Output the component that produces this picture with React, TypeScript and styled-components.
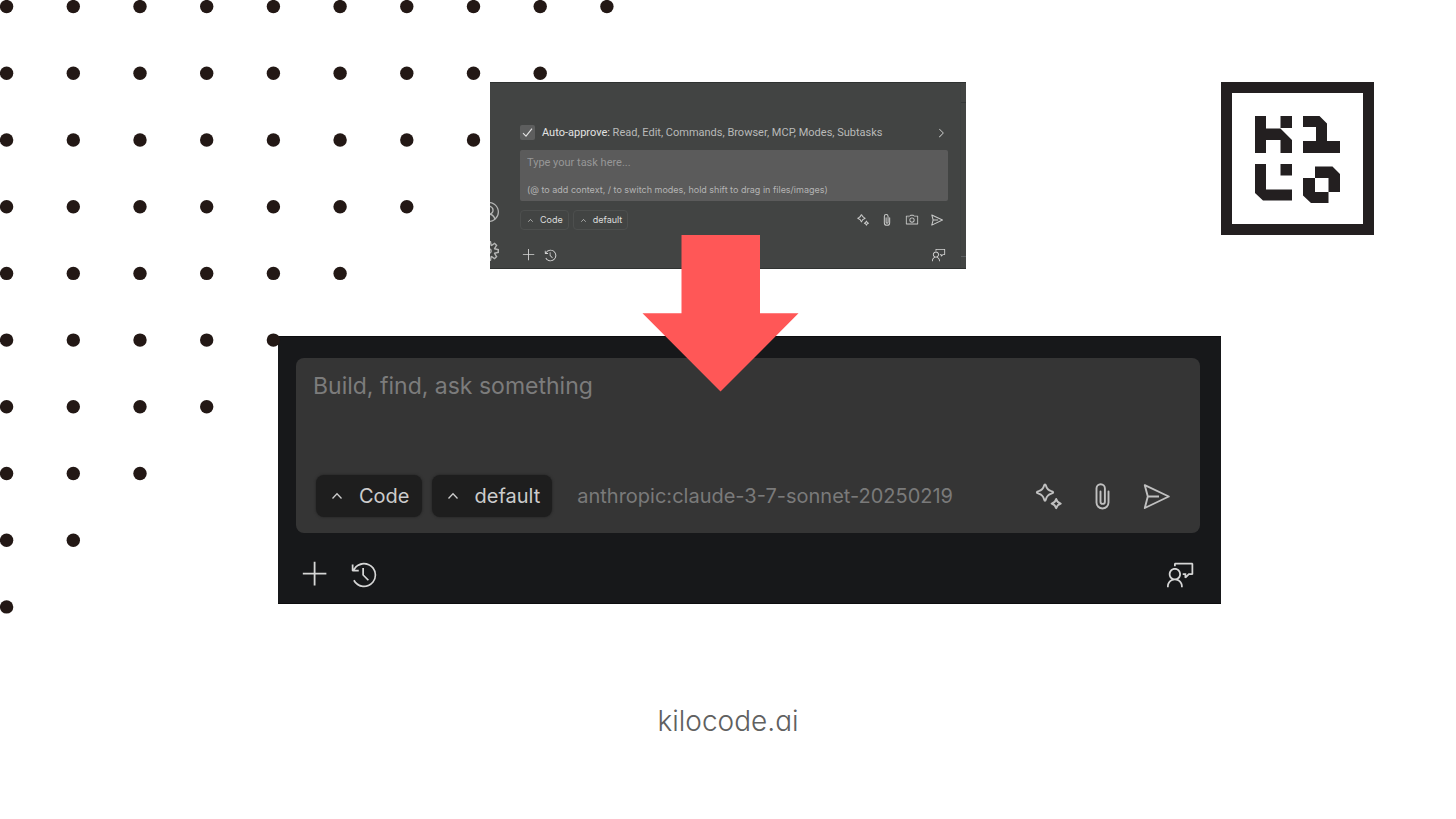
import React from "react";
import styled, { createGlobalStyle } from "styled-components";
import {
  VscAccount,
  VscAdd,
  VscChevronRight,
  VscDeviceCamera,
  VscFeedback,
  VscHistory,
  VscSettingsGear,
} from "react-icons/vsc";

const GlobalStyle = createGlobalStyle`
  * { box-sizing: border-box; }
  body {
    margin: 0;
    background: #ffffff;
    font-family: Inter, "Liberation Sans", sans-serif;
  }
`;

const Slide = styled.main`
  position: relative;
  display: flex;
  flex-direction: column;
  min-height: 100vh;
  padding-top: 82px;
  overflow: hidden;
`;

const DotField = styled.svg`
  position: absolute;
  top: 0;
  left: 0;
`;

const TopRow = styled.section`
  position: relative;
  display: grid;
  grid-template-columns: minmax(0, 1fr) minmax(0, 476px) minmax(0, 1fr);
  align-items: start;
  padding: 0 82px;
`;

const LogoLink = styled.a`
  grid-column: 3;
  justify-self: end;
  line-height: 0;
`;

const Arrow = styled.svg`
  position: absolute;
  top: 153px;
  left: calc(50% - 86px);
  z-index: 2;
`;

const BeforeCard = styled.form`
  position: relative;
  grid-column: 2;
  display: flex;
  flex-direction: column;
  height: 187px;
  padding: 42px 18px 0 30px;
  overflow: hidden;
  background: #424443;
  border: 1px solid #2f3231;
  border-width: 1px 0;
`;

const EdgeIcon = styled.span<{ $top: number }>`
  position: absolute;
  top: ${(p) => p.$top}px;
  left: -11px;
  font-size: 20px;
  line-height: 0;
  color: #b4b5b4;
`;

const ScrollEdge = styled.span`
  position: absolute;
  top: 0;
  right: 0;
  bottom: 0;
  width: 6px;
  border-left: 1px solid #3e4141;

  &::before,
  &::after {
    content: "";
    position: absolute;
    left: 0;
    right: 0;
    height: 1px;
    background: #343738;
  }
  &::before { top: 19px; }
  &::after { bottom: 11px; background: #5b5e60; }
`;

const ApproveRow = styled.div`
  display: flex;
  align-items: center;
  height: 15px;
  font-family: Roboto, "Liberation Sans", sans-serif;
  font-size: 11px;
  color: #b9bab9;
`;

const ApproveLabel = styled.label`
  display: flex;
  align-items: center;
  flex: 1;
  gap: 7px;
  white-space: nowrap;
`;

const ApproveName = styled.span`
  color: #e2e3e2;
`;

const Tick = styled.input`
  appearance: none;
  width: 15px;
  height: 15px;
  margin: 0;
  border-radius: 2px;
  background: #5d5e5e
    url("data:image/svg+xml,%3Csvg xmlns='http://www.w3.org/2000/svg' viewBox='0 0 15 15'%3E%3Cpath d='M3 8.2 6 11.2 12 3.6' fill='none' stroke='%23e4e4e4' stroke-width='1.1'/%3E%3C/svg%3E");
`;

const TaskBox = styled.div`
  display: flex;
  flex-direction: column;
  justify-content: space-between;
  height: 51px;
  margin-top: 10px;
  padding: 5px 7px;
  border-radius: 2px;
  background: #5b5b5b;
`;

const TaskInput = styled.textarea`
  display: block;
  width: 100%;
  height: 15px;
  padding: 0;
  border: 0;
  outline: 0;
  resize: none;
  overflow: hidden;
  background: transparent;
  color: #e0e0e0;
  font: 11px/15px Roboto, "Liberation Sans", sans-serif;

  &::placeholder { color: #979797; opacity: 1; }
`;

const Hint = styled.span`
  font-size: 9px;
  line-height: 12px;
  white-space: nowrap;
  color: #b4b4b4;
`;

const BeforeTools = styled.div`
  display: flex;
  align-items: center;
  gap: 4px;
  height: 20px;
  margin-top: 9px;
`;

const SmallChip = styled.button`
  display: flex;
  align-items: center;
  gap: 6px;
  height: 20px;
  padding: 0 5px 0 6px;
  border: 1px solid #4d4f4e;
  border-radius: 4px;
  background: transparent;
  color: #dcdddc;
  font: 9px/12px Inter, "Liberation Sans", sans-serif;
`;

const IconButton = styled.button<{ $size: number; $color: string }>`
  display: grid;
  place-items: center;
  padding: 0;
  border: 0;
  background: transparent;
  color: ${(p) => p.$color};
  font-size: ${(p) => p.$size}px;
  line-height: 0;
`;

const IconGroup = styled.div<{ $gap: number; $end: number }>`
  display: flex;
  align-items: center;
  gap: ${(p) => p.$gap}px;
  margin-left: auto;
  padding-right: ${(p) => p.$end}px;
`;

const BeforeFooter = styled.div`
  display: flex;
  align-items: center;
  gap: 8px;
  margin-top: 18px;
  padding: 0 2px;
`;

const AfterSection = styled.section`
  margin-top: 67px;
  padding: 0 235px 0 278px;
`;

const AfterCard = styled.form`
  height: 268px;
  padding: 21px 21px 0 18px;
  background: #17181a;
  border: 1px solid #0c0d0e;
  border-width: 1px 0;
`;

const Prompt = styled.div`
  display: flex;
  flex-direction: column;
  justify-content: space-between;
  height: 175px;
  padding: 12px 30px 16px 17px;
  border-radius: 8px;
  background: #353535;
`;

const PromptInput = styled.textarea`
  display: block;
  width: 100%;
  height: 64px;
  padding: 0;
  border: 0;
  outline: 0;
  resize: none;
  background: transparent;
  color: #d0d0d0;
  font: 23px/32px Inter, "Liberation Sans", sans-serif;

  &::placeholder { color: #7c7c7c; opacity: 1; }
`;

const PromptTools = styled.div`
  display: flex;
  align-items: center;
  gap: 10px;
  padding-left: 3px;
`;

const Chip = styled.button`
  display: flex;
  align-items: center;
  gap: 15px;
  height: 42px;
  padding: 0 12px 0 14px;
  border: 0;
  border-radius: 8px;
  background: #1e1e1e;
  box-shadow: 0 0 2px 1px #2b2b2b;
  color: #cccccc;
  font: 20px/28px Inter, "Liberation Sans", sans-serif;
`;

const Model = styled.span`
  margin-left: 15px;
  color: #7a7a7a;
  font-size: 20px;
  line-height: 28px;
  white-space: nowrap;
`;

const AfterFooter = styled.div`
  display: flex;
  align-items: center;
  gap: 20px;
  margin-top: 27px;
  padding: 0 5px;
`;

const SiteFooter = styled.footer`
  padding: 99px 0 60px;
  text-align: center;
`;

const SiteLink = styled.a`
  color: #606060;
  font-size: 28px;
  font-weight: 300;
  line-height: 36px;
  font-feature-settings: "cv11";
  text-decoration: none;
`;

const dotRows = Array.from({ length: 10 }, (_, row) => 10 - row);

function Dots() {
  return (
    <DotField width="640" height="640" aria-hidden="true">
      {dotRows.map((count, row) =>
        Array.from({ length: count }, (_, col) => (
          <circle
            key={`${row}-${col}`}
            cx={6.6 + col * 66.7}
            cy={6.6 + row * 66.7}
            r="6.7"
            fill="#231815"
          />
        )),
      )}
    </DotField>
  );
}

function KiloLogo() {
  return (
    <svg width="153" height="153" viewBox="0 0 153 153" role="img" aria-label="Kilo">
      <path fill="#231f20" d="M0 0H153V153H0ZM11 11V142H142V11Z" fillRule="evenodd" />
      <g fill="#231f20">
        <path d="M34 34h11v12.500h14.500L71 58v13H59.500V58H45v13H34Z" />
        <path d="M59.500 34H71v12H59.500Z" />
        <path d="M82 34h16.500l7.500 7.500V59h13v12H82V59h13V45H82Z" />
        <path d="M34 82h11v25.500h26v11H42L34 111Z" />
        <path d="M59.500 82H71v11.500H59.500Z" />
        <path
          fillRule="evenodd"
          d="M94 84.500h17.500l7.500 7.500v18h-11.500v11H90l-8-7.500V96h12ZM94 96v14h13.500V96Z"
        />
      </g>
    </svg>
  );
}

function Caret({ size }: { size: number }) {
  return (
    <svg width={size} height={size} viewBox="0 0 14 14" fill="none" aria-hidden="true">
      <path d="M2.500 9.500 7 4.800l4.500 4.700" stroke="currentColor" strokeWidth="1.300" />
    </svg>
  );
}

type Glyph = { size: number };

const lineWidth = (size: number) => (size < 20 ? 2.3 : 1.9);

function Sparkles({ size }: Glyph) {
  return (
    <svg width={size} height={size} viewBox="0 0 27 27" fill="none" stroke="currentColor" strokeWidth={lineWidth(size)} strokeLinejoin="round" aria-hidden="true">
      <path d="M10 1.500c.6 0 .8.500 1 1.300.9 3.400 2 4.500 5.400 5.400.9.200 1.800.500 1.800 1.200s-.9 1-1.800 1.200c-3.400.9-4.500 2-5.400 5.400-.200.800-.400 1.800-1 1.800s-.8-1-1-1.800c-.9-3.400-2-4.500-5.400-5.400-.9-.200-1.800-.500-1.800-1.200s.9-1 1.800-1.200C7 7.300 8.100 6.200 9 2.800c.200-.8.400-1.300 1-1.300Z" />
      <path d="M21.200 16c.8 3 1.600 3.800 4.600 4.600-3 .8-3.800 1.600-4.600 4.600-.8-3-1.600-3.800-4.600-4.600 3-.8 3.800-1.600 4.600-4.600Z" />
    </svg>
  );
}

function Clip({ size }: Glyph) {
  return (
    <svg width={size} height={size} viewBox="0 0 27 27" fill="none" stroke="currentColor" strokeWidth={lineWidth(size)} strokeLinecap="round" aria-hidden="true">
      <path d="M19.500 8.500v11a6 6 0 0 1-12 0V5.500a4.200 4.200 0 0 1 8.400 0v13.200a2.200 2.200 0 0 1-4.400 0V8.500" />
    </svg>
  );
}

function Send({ size }: Glyph) {
  return (
    <svg width={size} height={size} viewBox="0 0 27 27" fill="none" stroke="currentColor" strokeWidth={lineWidth(size)} strokeLinejoin="round" aria-hidden="true">
      <path d="M1.800 2.200 25.800 13.500 1.800 25l3-11.500ZM5 13.500h11" />
    </svg>
  );
}

export default function App() {
  const soft = "#c9cac9";
  const dim = "#c0c0c0";
  const bright = "#d6d6d6";
  return (
    <Slide>
      <GlobalStyle />
      <Dots />
      <TopRow>
        <BeforeCard>
          <EdgeIcon $top={119}><VscAccount /></EdgeIcon>
          <EdgeIcon $top={158}><VscSettingsGear /></EdgeIcon>
          <ScrollEdge />
          <ApproveRow>
            <ApproveLabel>
              <Tick type="checkbox" defaultChecked />
              <span>
                <ApproveName>Auto-approve:</ApproveName> Read, Edit, Commands, Browser, MCP, Modes, Subtasks
              </span>
            </ApproveLabel>
            <IconButton type="button" aria-label="Expand" $size={14} $color={soft}>
              <VscChevronRight />
            </IconButton>
          </ApproveRow>
          <TaskBox>
            <TaskInput aria-label="Task" placeholder="Type your task here..." />
            <Hint>(@ to add context, / to switch modes, hold shift to drag in files/images)</Hint>
          </TaskBox>
          <BeforeTools>
            <SmallChip type="button"><Caret size={7} />Code</SmallChip>
            <SmallChip type="button"><Caret size={7} />default</SmallChip>
            <IconGroup $gap={12} $end={5}>
              <IconButton type="button" aria-label="Enhance" $size={12} $color={soft}><Sparkles size={12} /></IconButton>
              <IconButton type="button" aria-label="Attach" $size={12} $color={soft}><Clip size={12} /></IconButton>
              <IconButton type="button" aria-label="Screenshot" $size={14} $color={soft}><VscDeviceCamera /></IconButton>
              <IconButton type="button" aria-label="Send" $size={12} $color={soft}><Send size={12} /></IconButton>
            </IconGroup>
          </BeforeTools>
          <BeforeFooter>
            <IconButton type="button" aria-label="New task" $size={14} $color={bright}><VscAdd /></IconButton>
            <IconButton type="button" aria-label="History" $size={13} $color={bright}><VscHistory /></IconButton>
            <IconGroup $gap={0} $end={0}>
              <IconButton type="button" aria-label="Feedback" $size={14} $color={bright}><VscFeedback /></IconButton>
            </IconGroup>
          </BeforeFooter>
        </BeforeCard>
        <LogoLink href="#" aria-label="Kilo home"><KiloLogo /></LogoLink>
        <Arrow width="157" height="157" viewBox="0 0 157 157" aria-hidden="true">
          <path fill="#ff5757" d="M39.500 0H118v78.300h38.500L78.500 156.500.5 78.300h39Z" />
        </Arrow>
      </TopRow>
      <AfterSection>
        <AfterCard>
          <Prompt>
            <PromptInput aria-label="Prompt" placeholder="Build, find, ask something" />
            <PromptTools>
              <Chip type="button"><Caret size={14} />Code</Chip>
              <Chip type="button"><Caret size={14} />default</Chip>
              <Model>anthropic:claude-3-7-sonnet-20250219</Model>
              <IconGroup $gap={27} $end={0}>
                <IconButton type="button" aria-label="Enhance" $size={27} $color={dim}><Sparkles size={27} /></IconButton>
                <IconButton type="button" aria-label="Attach" $size={27} $color={dim}><Clip size={27} /></IconButton>
                <IconButton type="button" aria-label="Send" $size={27} $color={dim}><Send size={27} /></IconButton>
              </IconGroup>
            </PromptTools>
          </Prompt>
          <AfterFooter>
            <IconButton type="button" aria-label="New task" $size={29} $color={bright}><VscAdd /></IconButton>
            <IconButton type="button" aria-label="History" $size={28} $color={bright}><VscHistory /></IconButton>
            <IconGroup $gap={0} $end={0}>
              <IconButton type="button" aria-label="Feedback" $size={28} $color={bright}><VscFeedback /></IconButton>
            </IconGroup>
          </AfterFooter>
        </AfterCard>
      </AfterSection>
      <SiteFooter>
        <SiteLink href="https://kilocode.ai">kilocode.ai</SiteLink>
      </SiteFooter>
    </Slide>
  );
}
